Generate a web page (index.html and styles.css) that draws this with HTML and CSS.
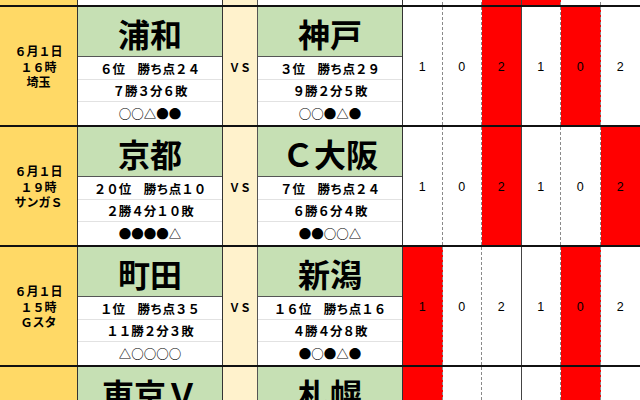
FILE: index.html
```html
<!DOCTYPE html>
<html lang="ja">
<head>
<meta charset="utf-8">
<link rel="stylesheet" href="styles.css">
</head>
<body>
<div class="sheet">
  <div class="row">
    <div class="info"></div>
    <div class="team"><div class="name"></div><div class="sub"></div><div class="sub"></div><div class="sub">●○○○○</div></div>
    <div class="vs"></div>
    <div class="team"><div class="name"></div><div class="sub"></div><div class="sub"></div><div class="sub">○○△○○</div></div>
    <div class="score"></div><div class="score"></div><div class="score red"></div><div class="score red"></div><div class="score"></div><div class="score"></div>
  </div>
  <div class="row">
    <div class="info">６月１日<br>１６時<br>埼玉</div>
    <div class="team"><div class="name">浦和</div><div class="sub">６位　勝ち点２４</div><div class="sub">７勝３分６敗</div><div class="sub">○○△●●</div></div>
    <div class="vs">ＶＳ</div>
    <div class="team"><div class="name">神戸</div><div class="sub">３位　勝ち点２９</div><div class="sub">９勝２分５敗</div><div class="sub">○○●△●</div></div>
    <div class="score">1</div><div class="score">0</div><div class="score red">2</div><div class="score">1</div><div class="score red">0</div><div class="score">2</div>
  </div>
  <div class="row">
    <div class="info">６月１日<br>１９時<br>サンガＳ</div>
    <div class="team"><div class="name">京都</div><div class="sub">２０位　勝ち点１０</div><div class="sub">２勝４分１０敗</div><div class="sub">●●●●△</div></div>
    <div class="vs">ＶＳ</div>
    <div class="team"><div class="name">Ｃ大阪</div><div class="sub">７位　勝ち点２４</div><div class="sub">６勝６分４敗</div><div class="sub">●●○○△</div></div>
    <div class="score">1</div><div class="score">0</div><div class="score red">2</div><div class="score">1</div><div class="score">0</div><div class="score red">2</div>
  </div>
  <div class="row">
    <div class="info">６月１日<br>１５時<br>Ｇスタ</div>
    <div class="team"><div class="name">町田</div><div class="sub">１位　勝ち点３５</div><div class="sub">１１勝２分３敗</div><div class="sub">△○○○○</div></div>
    <div class="vs">ＶＳ</div>
    <div class="team"><div class="name">新潟</div><div class="sub">１６位　勝ち点１６</div><div class="sub">４勝４分８敗</div><div class="sub">●○●△●</div></div>
    <div class="score red">1</div><div class="score">0</div><div class="score">2</div><div class="score">1</div><div class="score red">0</div><div class="score">2</div>
  </div>
  <div class="row">
    <div class="info"></div>
    <div class="team"><div class="name">東京Ｖ</div><div class="sub"></div><div class="sub"></div><div class="sub"></div></div>
    <div class="vs"></div>
    <div class="team"><div class="name">札幌</div><div class="sub"></div><div class="sub"></div><div class="sub"></div></div>
    <div class="score red"></div><div class="score"></div><div class="score"></div><div class="score"></div><div class="score red"></div><div class="score"></div>
  </div>
</div>
</body>
</html>
```

FILE: styles.css
```css
html, body {
  margin: 0;
  padding: 0;
  width: 640px;
  height: 400px;
  overflow: hidden;
  background: #ffffff;
}

.sheet {
  margin-top: -113px;
  font-family: "Noto Sans CJK JP", "Noto Sans", sans-serif;
  color: #000;
}

.row {
  display: grid;
  grid-template-columns: 78px 145px 35px 145px repeat(6, 1fr);
  height: 120px;
  box-sizing: border-box;
  border-bottom: 2px solid #111;
}

.info {
  background: #ffd966;
  border-right: 1px solid #333;
  display: flex;
  align-items: center;
  justify-content: center;
  text-align: center;
  font-size: 12px;
  font-weight: 700;
  line-height: 15.5px;
  padding-top: 1px;
}

.team {
  display: grid;
  grid-template-rows: 50px 23px 22px 23px;
  border-right: 1px solid #333;
  min-width: 0;
}

.name {
  background: #c6e0b4;
  border-bottom: 1px solid #555;
  display: flex;
  align-items: center;
  justify-content: center;
  font-size: 32px;
  font-weight: 700;
  line-height: 1;
  padding-top: 2px;
  white-space: nowrap;
}

.sub {
  display: flex;
  align-items: center;
  justify-content: center;
  font-size: 12.5px;
  font-weight: 700;
  white-space: nowrap;
  border-bottom: 1px solid #e2e2e2;
}

.sub:last-child {
  border-bottom: none;
}

.vs {
  background: #fff2cc;
  border-right: 1px solid #555;
  display: flex;
  align-items: center;
  justify-content: center;
  font-size: 11px;
  font-weight: 700;
  padding-top: 1px;
}

.score {
  display: flex;
  align-items: center;
  justify-content: center;
  font-family: "Liberation Sans", Arial, sans-serif;
  font-size: 12.5px;
  border-right: 1px dashed #8a8a8a;
  padding-top: 1px;
}

.score:nth-child(7) {
  border-right: 1px solid #444;
}

.score:last-child {
  border-right: none;
}

.red {
  background: #ff0000;
}
```
